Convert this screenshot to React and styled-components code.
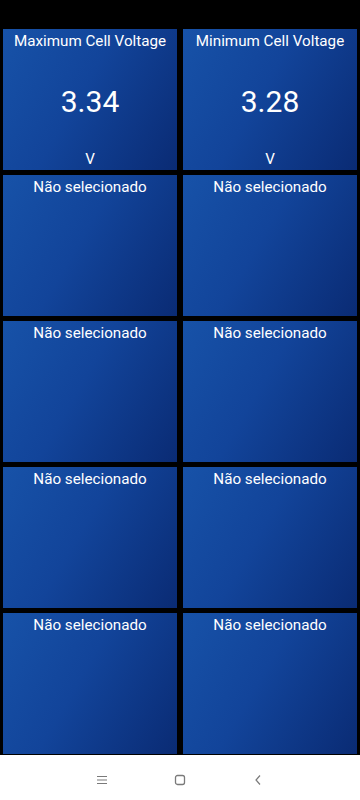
import React from 'react';
import styled, { createGlobalStyle } from 'styled-components';

const GlobalStyle = createGlobalStyle`
  html, body {
    margin: 0;
    padding: 0;
    background: #000;
  }
  body {
    font-family: Roboto, "Noto Sans", "Liberation Sans", sans-serif;
  }
`;

const Screen = styled.div`
  width: 360px;
  height: 800px;
  display: flex;
  flex-direction: column;
  background: #000;
`;

const StatusBar = styled.div`
  height: 29px;
  flex-shrink: 0;
`;

const Grid = styled.div`
  display: grid;
  grid-template-columns: 174px 174px;
  grid-auto-rows: 141px;
  column-gap: 6px;
  row-gap: 5px;
  padding: 0 3px;
`;

const Tile = styled.div`
  display: flex;
  flex-direction: column;
  align-items: center;
  color: #fff;
  background: linear-gradient(120deg, #1752a8 0%, #12449a 45%, #0a2b74 100%);
  box-sizing: border-box;
  padding: 2px 4px 1px;
`;

const Title = styled.div`
  font-size: 15.2px;
  line-height: 20px;
  white-space: nowrap;
`;

const Value = styled.div`
  flex: 1;
  display: flex;
  align-items: center;
  font-size: 30px;
  padding-top: 2px;
`;

const Unit = styled.div`
  font-size: 15.2px;
  line-height: 20px;
`;

const NavBar = styled.div`
  margin-top: auto;
  height: 45px;
  background: #fff;
  display: flex;
  align-items: center;
  justify-content: center;
  padding-top: 4px;
  box-sizing: border-box;
`;

const NavButton = styled.div`
  width: 78px;
  display: flex;
  justify-content: center;
  align-items: center;
`;

const tiles = [
  { title: 'Maximum Cell Voltage', value: '3.34', unit: 'V' },
  { title: 'Minimum Cell Voltage', value: '3.28', unit: 'V' },
  ...Array.from({ length: 8 }, () => ({ title: 'Não selecionado' })),
];

export default function App() {
  return (
    <Screen>
      <GlobalStyle />
      <StatusBar />
      <Grid>
        {tiles.map((t, i) => (
          <Tile key={i}>
            <Title>{t.title}</Title>
            {t.value && <Value>{t.value}</Value>}
            {t.unit && <Unit>{t.unit}</Unit>}
          </Tile>
        ))}
      </Grid>
      <NavBar>
        <NavButton>
          <svg width="12" height="10" viewBox="0 0 12 10">
            <path d="M1 1.5h10M1 5h10M1 8.5h10" stroke="#7a7a7a" strokeWidth="1.2" />
          </svg>
        </NavButton>
        <NavButton>
          <svg width="12" height="12" viewBox="0 0 12 12">
            <rect x="1.5" y="1.5" width="9" height="9" rx="2" fill="none" stroke="#7a7a7a" strokeWidth="1.3" />
          </svg>
        </NavButton>
        <NavButton>
          <svg width="10" height="12" viewBox="0 0 10 12">
            <path d="M7 1.5L3 6l4 4.5" fill="none" stroke="#7a7a7a" strokeWidth="1.2" />
          </svg>
        </NavButton>
      </NavBar>
    </Screen>
  );
}
